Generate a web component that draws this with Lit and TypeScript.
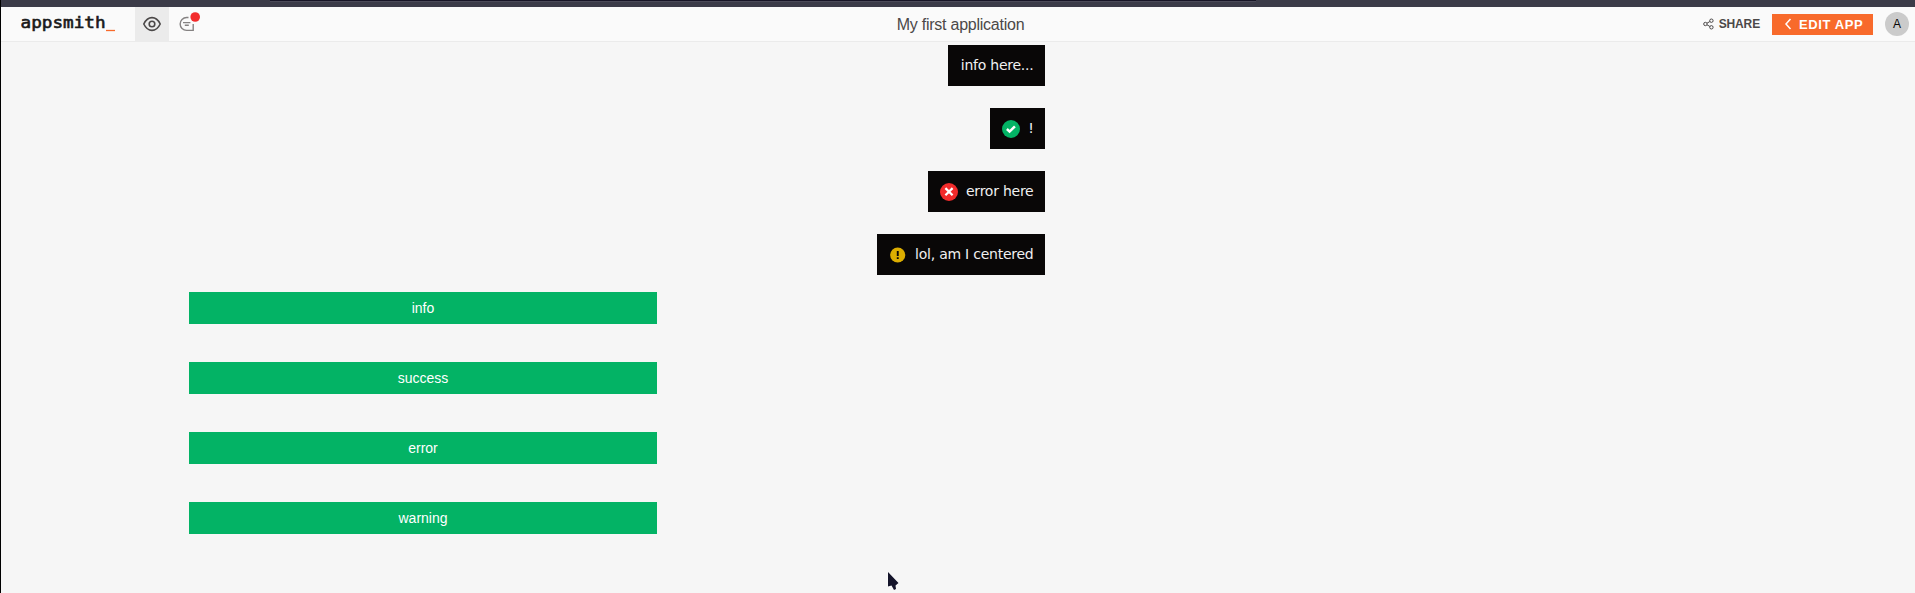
import { LitElement, html, css, svg, nothing } from "lit";
import { customElement } from "lit/decorators.js";

type Kind = "info" | "success" | "error" | "warning";

const toasts: { kind: Kind; text: string }[] = [
  { kind: "info", text: "info here..." },
  { kind: "success", text: "!" },
  { kind: "error", text: "error here" },
  { kind: "warning", text: "lol, am I centered" },
];

const glyphs = {
  success: svg`<circle cx="10" cy="10" r="9" fill="#03b365"/><path d="M5.900 10l2.700 2.600 5.300-5.300" fill="none" stroke="#fff" stroke-width="2.500"/>`,
  error: svg`<circle cx="10" cy="10" r="9" fill="#f22b2b"/><path d="M6.400 6.100l7.200 7.200M13.600 6.100l-7.200 7.200" fill="none" stroke="#fff" stroke-width="2.200"/>`,
  warning: svg`<circle cx="9.700" cy="10" r="7.600" fill="#dcad00"/><path d="M8.800 6h1.900v5H8.800zM8.800 12.200h1.900v1.800H8.800z" fill="#090707"/>`,
};

@customElement("app-root")
export class AppRoot extends LitElement {
  static styles = css`
    :host {
      display: flex;
      flex-direction: column;
      box-sizing: border-box;
      height: 593px;
      overflow: hidden;
      position: relative;
      border-left: 1px solid #000;
      background: #f6f6f6;
      font-family: "Liberation Sans", Arial, sans-serif;
    }
    .chrome {
      flex: none;
      height: 7px;
      background: #3b3b48;
      padding-left: 269px;
    }
    .tab { width: 986px; height: 1px; background: #171526; border-bottom: 1px solid #4b4a58; }
    header {
      flex: none;
      height: 34px;
      display: grid;
      grid-template-columns: 1fr auto 1fr;
      grid-template-rows: 34px;
      background: #fafafa;
      border-bottom: 1px solid #ebebeb;
    }
    .left, .right { display: flex; align-items: center; }
    .right { justify-content: flex-end; padding-right: 6px; }
    .logo { width: 114px; padding-left: 20px; margin-top: -4px; }
    .logo text { font: 16px "DejaVu Sans Mono", monospace; }
    .eye { width: 34px; height: 34px; background: #ebebeb; display: grid; place-items: center; }
    .comment { padding-left: 8px; }
    svg { display: block; flex: none; }
    .title { padding-left: 5px; font-size: 16px; line-height: 35px; color: #4b4848; letter-spacing: -0.24px; }
    .share { display: flex; align-items: center; gap: 5px; font-weight: 700; font-size: 12px; color: #4b4848; letter-spacing: -0.15px; }
    .share span { margin-top: -1px; }
    .edit {
      display: flex;
      align-items: center;
      box-sizing: border-box;
      width: 101px;
      height: 21px;
      margin-left: 12px;
      padding-left: 12px;
      gap: 7px;
      background: #f86a2b;
      color: #fff;
      font-weight: 700;
      font-size: 13px;
      letter-spacing: 0.6px;
      white-space: nowrap;
    }
    .avatar {
      width: 24px;
      height: 24px;
      border-radius: 50%;
      margin-left: 12px;
      background: #cbcbcb;
      color: #090707;
      font-size: 12px;
      line-height: 24px;
      text-align: center;
    }
    .toasts {
      display: flex;
      flex-direction: column;
      align-items: flex-end;
      gap: 22px;
      width: 1044px;
      padding-top: 3px;
    }
    .toast {
      display: flex;
      align-items: flex-start;
      box-sizing: border-box;
      height: 41px;
      padding: 10px 11.5px 0 13px;
      background: #090707;
      color: #f0f0f0;
      font: 14px/20px "DejaVu Sans", sans-serif;
      letter-spacing: -0.24px;
      white-space: nowrap;
    }
    .toast svg { margin-top: 1px; }
    .toast.icon { padding-left: 11px; gap: 7px; }
    .buttons { display: flex; flex-direction: column; gap: 38px; padding: 17px 0 0 188px; }
    button {
      width: 468px;
      height: 32px;
      padding: 0;
      border: 0;
      background: #03b365;
      color: #fff;
      font: 14px/32px "Liberation Sans", Arial, sans-serif;
    }
    .pointer { position: absolute; left: 884px; top: 570px; }
  `;

  render() {
    return html`
      <div class="chrome"><div class="tab"></div></div>
      <header>
        <div class="left">
          <div class="logo">
            <svg width="96" height="24" viewBox="0 0 96 24">
              <text x="-0.5" y="18" textLength="85" lengthAdjust="spacingAndGlyphs" fill="#191919" stroke="#191919" stroke-width="0.600">appsmith</text>
              <path d="M85 20.500h9" stroke="#f86a2b" stroke-width="1.300"/>
            </svg>
          </div>
          <div class="eye">
            <svg width="20" height="20" viewBox="0 0 20 20" fill="none" stroke="#4b4848" stroke-width="1.600">
              <path d="M1.800 10C3.800 5.800 6.500 3.600 10 3.600s6.200 2.200 8.200 6.400c-2 4.200-4.700 6.400-8.200 6.400S3.800 14.200 1.800 10z"/>
              <circle cx="10" cy="10" r="2.800"/>
            </svg>
          </div>
          <div class="comment">
            <svg width="24" height="24" viewBox="0 0 24 24" fill="none" stroke="#858282" stroke-width="1.400">
              <path d="M11.500 5.500H9.600a6.400 6.400 0 0 0 0 12.900h6.600V12"/>
              <path d="M6 10.600h7.400M7.800 13.300h4"/>
              <circle cx="18.200" cy="5" r="4.800" fill="#f22b2b" stroke="none"/>
            </svg>
          </div>
        </div>
        <div class="title">My first application</div>
        <div class="right">
          <div class="share">
            <svg width="11" height="12" viewBox="0 0 11 12" fill="none" stroke="#4b4848">
              <circle cx="2.400" cy="6" r="1.700"/><circle cx="8.400" cy="2.700" r="1.700"/><circle cx="8.400" cy="9.300" r="1.700"/>
              <path d="M4 5.200l2.800-1.600M4 6.800l2.800 1.600"/>
            </svg>
            <span>SHARE</span>
          </div>
          <div class="edit">
            <svg width="8" height="12" viewBox="0 0 8 12" fill="none" stroke="#fff" stroke-width="1.500"><path d="M6.500 1L2 6l4.500 5"/></svg>
            <span>EDIT APP</span>
          </div>
          <div class="avatar">A</div>
        </div>
      </header>
      <div class="toasts">
        ${toasts.map(
          (t) => html`<div class="toast ${t.kind === "info" ? "" : "icon"}">
            ${t.kind === "info" ? nothing : html`<svg width="20" height="20" viewBox="0 0 20 20">${glyphs[t.kind]}</svg>`}
            <span>${t.text}</span>
          </div>`
        )}
      </div>
      <div class="buttons">${toasts.map((t) => html`<button>${t.kind}</button>`)}</div>
      <svg class="pointer" width="16" height="22" viewBox="0 0 16 22">
        <path d="M3 2v14.500l3.500-1 2.500 4.500 2-1-.5-3.500 3-2.500z" fill="#14142a" stroke="#fff" stroke-opacity=".8" paint-order="stroke"/>
      </svg>
    `;
  }
}
